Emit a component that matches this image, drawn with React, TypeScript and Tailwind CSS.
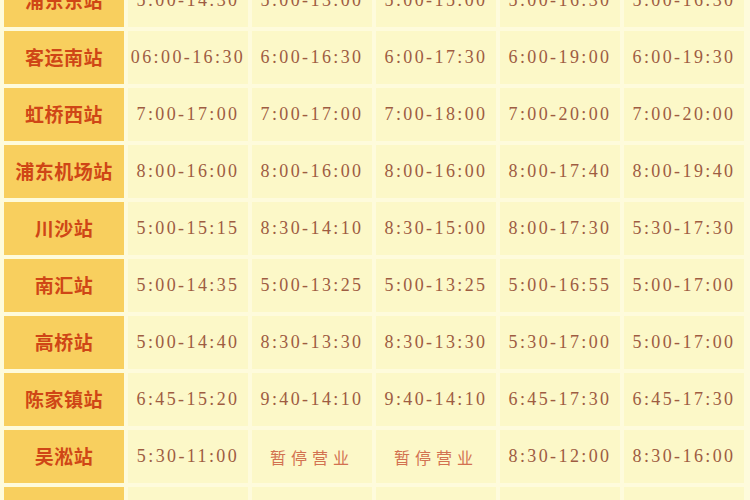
const rows: { name: string; times: string[] }[] = [
  { name: "浦东东站", times: ["5:00-14:30", "5:00-13:00", "5:00-15:00", "5:00-16:30", "5:00-16:30"] },
  { name: "客运南站", times: ["06:00-16:30", "6:00-16:30", "6:00-17:30", "6:00-19:00", "6:00-19:30"] },
  { name: "虹桥西站", times: ["7:00-17:00", "7:00-17:00", "7:00-18:00", "7:00-20:00", "7:00-20:00"] },
  { name: "浦东机场站", times: ["8:00-16:00", "8:00-16:00", "8:00-16:00", "8:00-17:40", "8:00-19:40"] },
  { name: "川沙站", times: ["5:00-15:15", "8:30-14:10", "8:30-15:00", "8:00-17:30", "5:30-17:30"] },
  { name: "南汇站", times: ["5:00-14:35", "5:00-13:25", "5:00-13:25", "5:00-16:55", "5:00-17:00"] },
  { name: "高桥站", times: ["5:00-14:40", "8:30-13:30", "8:30-13:30", "5:30-17:00", "5:00-17:00"] },
  { name: "陈家镇站", times: ["6:45-15:20", "9:40-14:10", "9:40-14:10", "6:45-17:30", "6:45-17:30"] },
  { name: "吴淞站", times: ["5:30-11:00", "暂停营业", "暂停营业", "8:30-12:00", "8:30-16:00"] },
  { name: "", times: ["", "", "", "", ""] },
]

function TimeCell({ value }: { value: string }) {
  const closed = value === "暂停营业"
  return (
    <div className="h-[53px] bg-[#fcf8c8] flex items-center justify-center">
      {closed ? (
        <span className="text-[16px] tracking-[5px] text-[#d27150] font-['Noto_Sans_CJK_SC',serif]">
          {value}
        </span>
      ) : (
        <span className="text-[18px] tracking-[2.4px] text-[#9e5c42] font-['Liberation_Serif',serif]">
          {value}
        </span>
      )}
    </div>
  )
}

export default function App() {
  return (
    <div className="w-[750px] h-[500px] overflow-hidden bg-[#fefbdc]">
      <div className="-mt-[26px] pl-[4px] grid grid-cols-[120px_repeat(5,120px)] gap-[4px]">
        {rows.map((row, i) => (
          <div key={i} className="contents">
            <div className="h-[53px] bg-[#f8cf5e] flex items-center justify-center">
              <span className="text-[19px] font-bold tracking-[0.5px] text-[#cf4616] font-['Noto_Sans_CJK_SC',sans-serif]">
                {row.name}
              </span>
            </div>
            {row.times.map((t, j) => (
              <TimeCell key={j} value={t} />
            ))}
          </div>
        ))}
      </div>
    </div>
  )
}
